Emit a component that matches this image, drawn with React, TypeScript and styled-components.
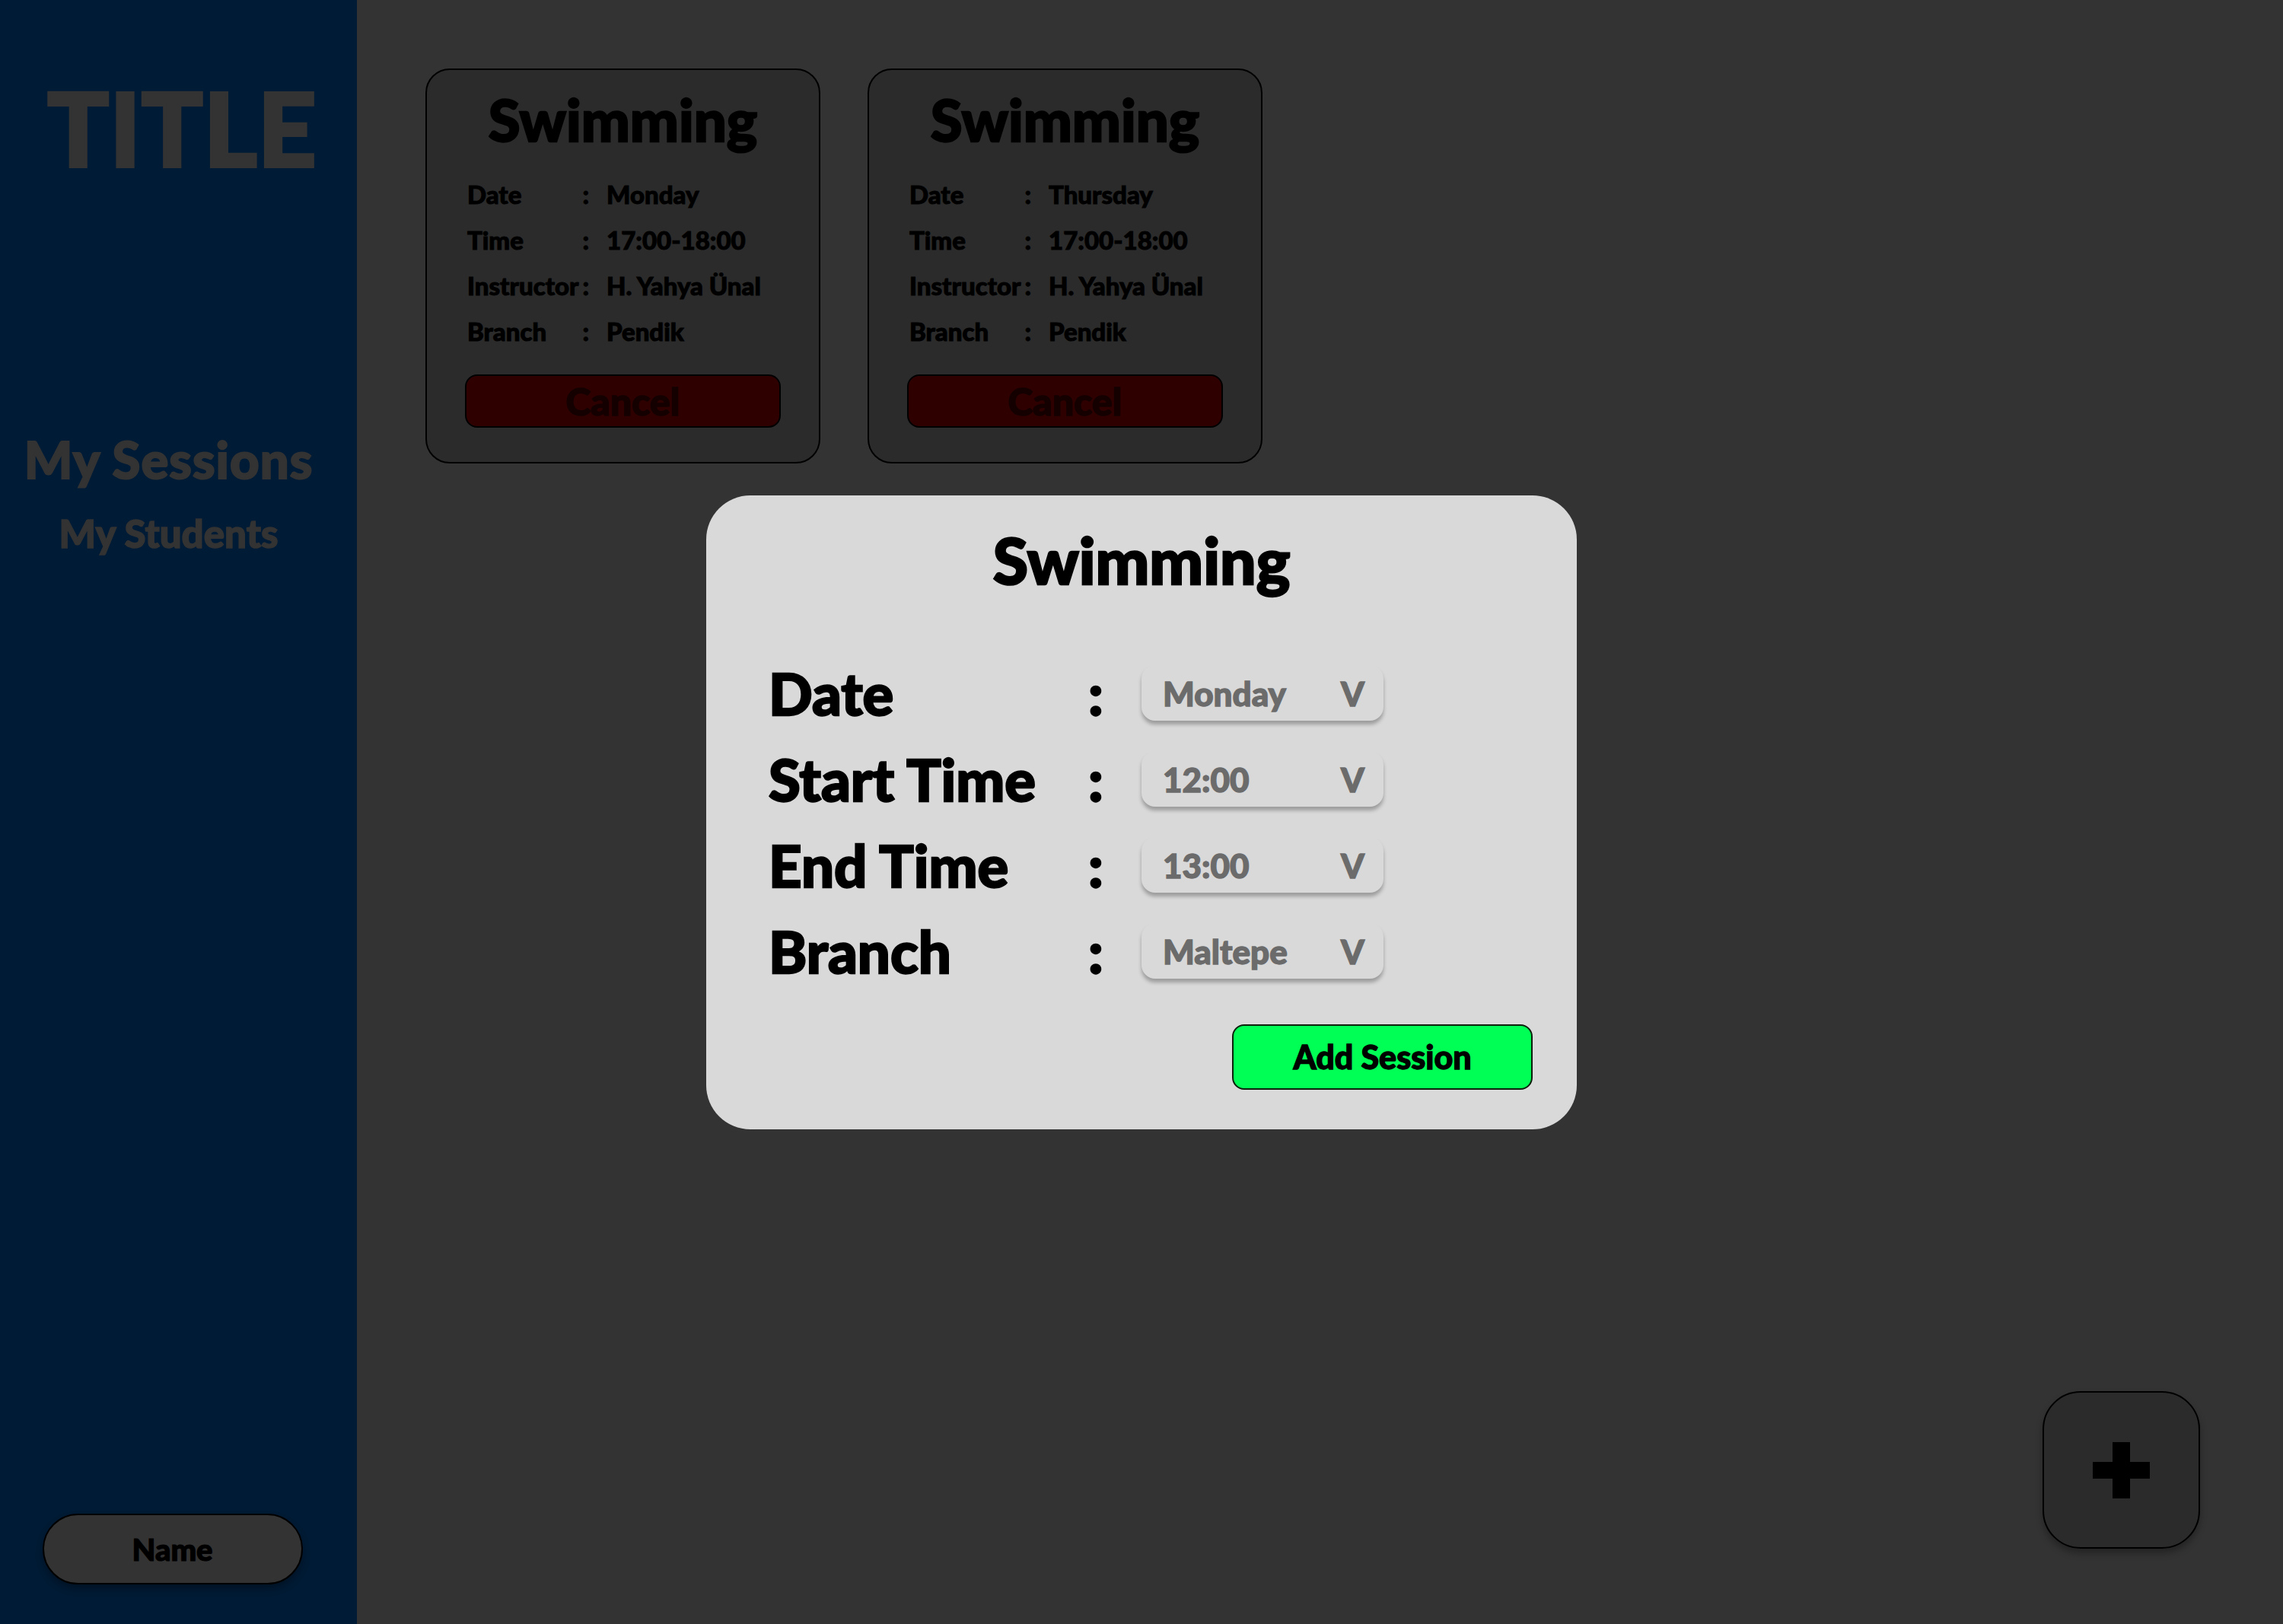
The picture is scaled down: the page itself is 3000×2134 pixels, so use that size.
import React from 'react'
import styled, { createGlobalStyle } from 'styled-components'

const GlobalStyle = createGlobalStyle`
  html, body {
    margin: 0;
    padding: 0;
  }
  body {
    font-family: Lato, "Open Sans", "DejaVu Sans", sans-serif;
    background: #333333;
  }
  * {
    box-sizing: border-box;
  }
`

const sessions = [
  { day: 'Monday', time: '17:00-18:00', instructor: 'H. Yahya Ünal', branch: 'Pendik' },
  { day: 'Thursday', time: '17:00-18:00', instructor: 'H. Yahya Ünal', branch: 'Pendik' },
]

const fields = [
  { label: 'Date', value: 'Monday' },
  { label: 'Start Time', value: '12:00' },
  { label: 'End Time', value: '13:00' },
  { label: 'Branch', value: 'Maltepe' },
]

// Lato only ships up to bold here, so a thin stroke thickens the heavy headings
const heavy = `
  font-weight: 900;
  -webkit-text-stroke: 0.03em currentColor;
`

const Layout = styled.div`
  position: relative;
  display: flex;
  width: 3000px;
  height: 2134px;
  background: #333333;
  overflow: hidden;
`

const Sidebar = styled.aside`
  width: 469px;
  flex-shrink: 0;
  background: #001b35;
  display: flex;
  flex-direction: column;
  align-items: center;
  padding: 101px 0 52px;
  color: #333333;
`

const Title = styled.h1`
  margin: 0 0 0 10px;
  font-size: 134px;
  ${heavy}
  line-height: 1;
  letter-spacing: 1px;
`

const NavLink = styled.a<{ $size: number; $gap: number; $spacing: number }>`
  margin-top: ${p => p.$gap}px;
  margin-right: 26px;
  font-size: ${p => p.$size}px;
  ${heavy}
  line-height: 1;
  letter-spacing: ${p => p.$spacing}px;
  color: #333333;
  text-decoration: none;
`

const NameButton = styled.button`
  margin-top: auto;
  margin-right: 16px;
  width: 342px;
  height: 93px;
  border-radius: 47px;
  border: 2px solid #000;
  background: #333333;
  box-shadow: 0 6px 10px rgba(0, 0, 0, 0.3);
  font-family: inherit;
  font-size: 40px;
  ${heavy}
  color: #000;
  line-height: 1;
`

const Main = styled.main`
  flex: 1;
  display: flex;
  flex-direction: column;
  padding: 90px 109px 99px 90px;
`

const CardRow = styled.div`
  display: flex;
  gap: 62px;
`

const Card = styled.section`
  width: 519px;
  height: 519px;
  border: 2px solid #000;
  border-radius: 32px;
  background: #2b2b2b;
  display: flex;
  flex-direction: column;
  align-items: center;
  padding-top: 27px;
  color: #000;
`

const CardTitle = styled.h2`
  margin: 0;
  font-size: 76px;
  ${heavy}
  line-height: 1;
`

const Details = styled.div`
  align-self: stretch;
  margin-top: 30px;
  padding-left: 53px;
  display: grid;
  grid-template-columns: 160px auto;
  column-gap: 23px;
  font-size: 33px;
  ${heavy}
  line-height: 60px;
`

const DetailLabel = styled.span`
  display: flex;
  justify-content: space-between;
  gap: 2px;
`

const CancelButton = styled.button`
  margin-top: 27px;
  width: 415px;
  height: 70px;
  border-radius: 16px;
  border: 2px solid #000;
  background: #2e0000;
  color: #150000;
  font-family: inherit;
  font-size: 50px;
  ${heavy}
  line-height: 1;
  padding: 0;
`

const Fab = styled.button`
  margin-top: auto;
  align-self: flex-end;
  width: 207px;
  height: 207px;
  border-radius: 50px;
  border: 2px solid #000;
  background: #2b2b2b;
  box-shadow: 0 6px 10px rgba(0, 0, 0, 0.3);
  display: flex;
  align-items: center;
  justify-content: center;
  padding: 0;
`

const Overlay = styled.div`
  position: absolute;
  inset: 0;
  display: flex;
  align-items: center;
  justify-content: center;
`

const Modal = styled.div`
  width: 1144px;
  height: 833px;
  border-radius: 58px;
  background: #d9d9d9;
  display: flex;
  flex-direction: column;
  padding: 43px 0 52px;
  color: #000;
`

const ModalTitle = styled.h2`
  margin: 0;
  text-align: center;
  font-size: 84px;
  ${heavy}
  line-height: 1;
`

const Form = styled.div`
  margin-top: 95px;
  padding-left: 82px;
  display: grid;
  grid-template-columns: 420px 70px 318px;
  row-gap: 37px;
  align-items: center;
`

const FieldLabel = styled.div`
  font-size: 76px;
  ${heavy}
  line-height: 1;
`

const Select = styled.div`
  height: 73px;
  border-radius: 18px;
  background: #d9d9d9;
  box-shadow: 0 5px 5px rgba(0, 0, 0, 0.28);
  display: flex;
  align-items: center;
  justify-content: space-between;
  padding: 0 25px 0 28px;
  font-size: 44px;
  ${heavy}
  line-height: 1;
  color: #6b6b6b;
`

const AddButton = styled.button`
  margin-top: 58px;
  margin-right: 58px;
  align-self: flex-end;
  width: 395px;
  height: 97px;
  border-radius: 16px;
  border: 2px solid #0b1f0b;
  background: #00ff55;
  color: #000;
  font-family: inherit;
  font-size: 43px;
  ${heavy}
  line-height: 1;
  padding: 0;
`

function PlusIcon() {
  return (
    <svg width="75" height="74" viewBox="0 0 75 74">
      <rect x="26" y="0" width="23" height="74" fill="#000" />
      <rect x="0" y="26" width="75" height="22" fill="#000" />
    </svg>
  )
}

export default function App() {
  return (
    <>
      <GlobalStyle />
      <Layout>
        <Sidebar>
          <Title>TITLE</Title>
          <NavLink $size={67} $gap={335} $spacing={1}>My Sessions</NavLink>
          <NavLink $size={51} $gap={38} $spacing={0}>My Students</NavLink>
          <NameButton>Name</NameButton>
        </Sidebar>
        <Main>
          <CardRow>
            {sessions.map((s, i) => (
              <Card key={i}>
                <CardTitle>Swimming</CardTitle>
                <Details>
                  <DetailLabel><span>Date</span><span>:</span></DetailLabel><span>{s.day}</span>
                  <DetailLabel><span>Time</span><span>:</span></DetailLabel><span>{s.time}</span>
                  <DetailLabel><span>Instructor</span><span>:</span></DetailLabel><span>{s.instructor}</span>
                  <DetailLabel><span>Branch</span><span>:</span></DetailLabel><span>{s.branch}</span>
                </Details>
                <CancelButton>Cancel</CancelButton>
              </Card>
            ))}
          </CardRow>
          <Fab>
            <PlusIcon />
          </Fab>
        </Main>
        <Overlay>
          <Modal>
            <ModalTitle>Swimming</ModalTitle>
            <Form>
              {fields.map(f => (
                <React.Fragment key={f.label}>
                  <FieldLabel>{f.label}</FieldLabel>
                  <FieldLabel>:</FieldLabel>
                  <Select>
                    <span>{f.value}</span>
                    <span>V</span>
                  </Select>
                </React.Fragment>
              ))}
            </Form>
            <AddButton>Add Session</AddButton>
          </Modal>
        </Overlay>
      </Layout>
    </>
  )
}
